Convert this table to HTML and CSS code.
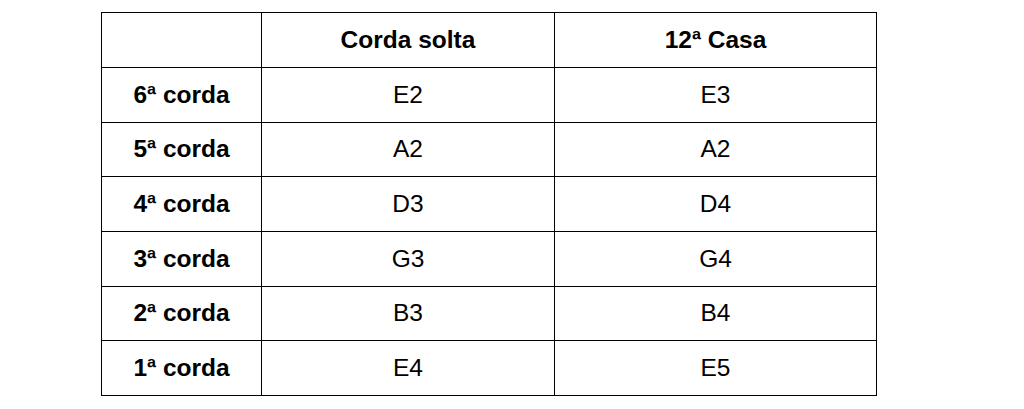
FILE: index.html
```html
<!DOCTYPE html>
<html lang="pt">
<head>
<meta charset="utf-8">
<title>Cordas</title>
<link rel="stylesheet" href="styles.css">
</head>
<body>
<table class="notes">
  <colgroup>
    <col class="c1">
    <col class="c2">
    <col class="c3">
  </colgroup>
  <tr class="head">
    <td></td>
    <td>Corda solta</td>
    <td>12ª Casa</td>
  </tr>
  <tr><td class="lbl">6ª corda</td><td>E2</td><td>E3</td></tr>
  <tr><td class="lbl">5ª corda</td><td>A2</td><td>A2</td></tr>
  <tr><td class="lbl">4ª corda</td><td>D3</td><td>D4</td></tr>
  <tr><td class="lbl">3ª corda</td><td>G3</td><td>G4</td></tr>
  <tr><td class="lbl">2ª corda</td><td>B3</td><td>B4</td></tr>
  <tr><td class="lbl">1ª corda</td><td>E4</td><td>E5</td></tr>
</table>
</body>
</html>
```
FILE: styles.css
```css
html, body {
  margin: 0;
  padding: 0;
  background: #fff;
}
.notes {
  margin: 12px 0 0 101px;
  border-collapse: separate;
  border-spacing: 0;
  table-layout: fixed;
  width: 776px;
  border-left: 1px solid #000;
  border-top: 1px solid #000;
  font-family: "Liberation Sans", Arial, sans-serif;
  font-size: 24.5px;
  color: #000;
}
.c1 { width: 160px; }
.c2 { width: 293px; }
.c3 { width: 322px; }
.notes td {
  box-sizing: border-box;
  height: 54.7px;
  padding: 0;
  border-right: 1px solid #000;
  border-bottom: 1px solid #000;
  text-align: center;
  vertical-align: middle;
  line-height: 1;
}
.notes tr:first-child td { height: 55px; }
.head td,
.notes td.lbl {
  font-weight: bold;
}
```
